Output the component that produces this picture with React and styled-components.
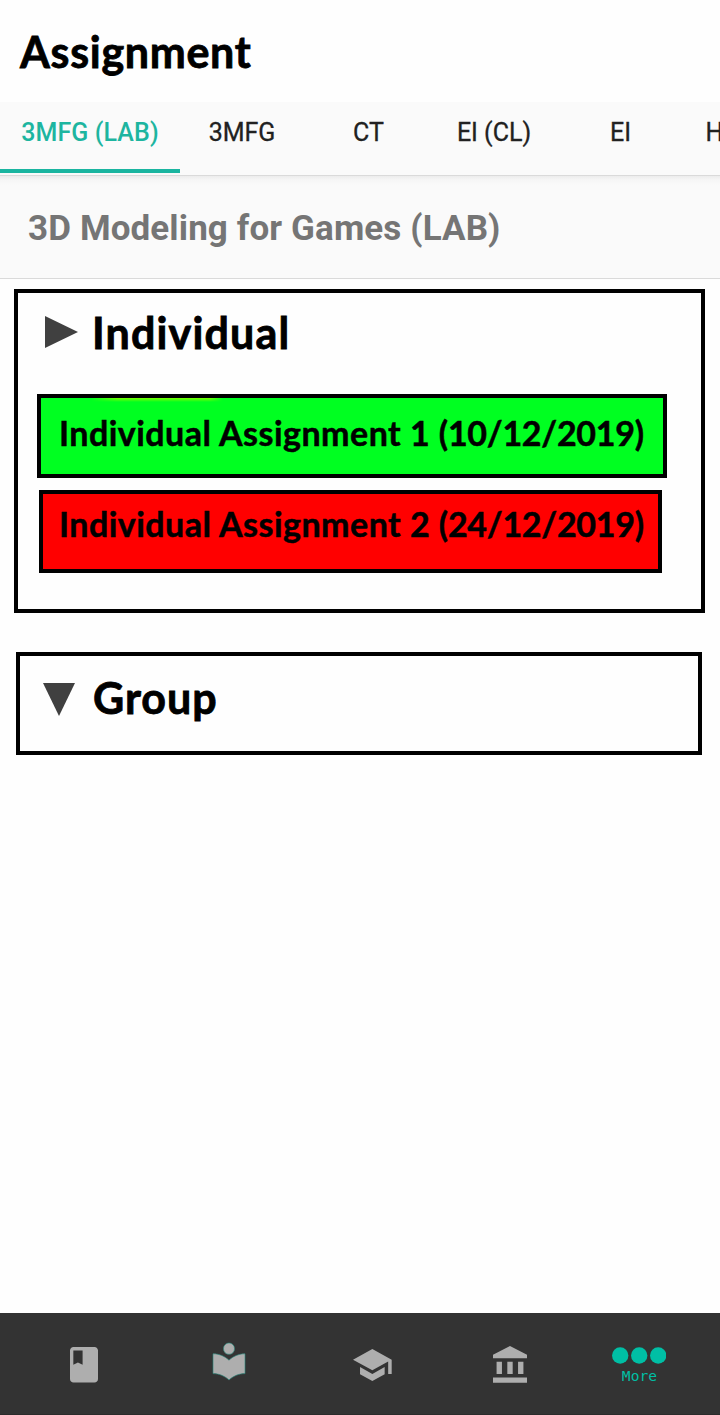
import React from "react";
import styled, { createGlobalStyle } from "styled-components";

const Global = createGlobalStyle`
  * { box-sizing: border-box; }
  body { margin: 0; background: #fefefe; }
`;

const Page = styled.div`
  width: 720px;
  height: 1415px;
  display: flex;
  flex-direction: column;
  overflow: hidden;
  background: #fefefe;
  font-family: Roboto, "Liberation Sans", sans-serif;
`;

const Header = styled.header`
  height: 102px;
  flex: none;
  padding: 26px 0 0 20px;
`;

const Heading = styled.span`
  display: block;
  width: max-content;
  font: 700 ${(p) => p.$size}px/${(p) => p.$line || 52}px Lato, "Liberation Sans", sans-serif;
  letter-spacing: ${(p) => p.$spacing}px;
  color: #000;
  -webkit-text-stroke: ${(p) => p.$weight || 0.8}px #000;
  white-space: nowrap;
`;

const DateText = styled.span`
  letter-spacing: -0.26px;
`;

const Tabs = styled.nav`
  height: 74px;
  flex: none;
  display: flex;
  overflow: hidden;
  background: #fafafa;
  border-bottom: 1px solid #dadada;
`;

const Tab = styled.div`
  flex: none;
  width: ${(p) => p.$width}px;
  height: 71px;
  padding-top: 16px;
  text-align: center;
  font-size: 25px;
  line-height: 30px;
  font-weight: ${(p) => (p.$active ? 500 : 400)};
  -webkit-text-stroke: ${(p) => (p.$active ? 0 : 0.3)}px currentColor;
  letter-spacing: ${(p) => (p.$active ? 0.1 : 0)}px;
  color: ${(p) => (p.$active ? "#1db5a0" : "#212121")};
  border-bottom: 4px solid ${(p) => (p.$active ? "#1ab5a0" : "transparent")};
  white-space: nowrap;
`;

const Course = styled.section`
  height: 103px;
  flex: none;
  padding: 33px 0 0 28px;
  font-size: 35px;
  line-height: 40px;
  font-weight: 700;
  letter-spacing: 0.12px;
  color: #757575;
  background: linear-gradient(#ececec, #f6f6f6 4px, #fafafa 9px);
  border-bottom: 1px solid #dadada;
`;

const Main = styled.main`
  flex: 1;
  display: flex;
  flex-direction: column;
  align-items: flex-start;
  gap: 39px;
  padding: 10px 0 0 14px;
`;

const Panel = styled.section`
  width: ${(p) => p.$width}px;
  height: ${(p) => p.$height}px;
  margin-left: ${(p) => p.$indent || 0}px;
  border: 4px solid #000;
`;

const PanelTitle = styled.div`
  display: flex;
  align-items: flex-start;
  gap: ${(p) => p.$gap}px;
  padding: ${(p) => p.$top}px 0 0 ${(p) => p.$left}px;
  svg { flex: none; margin-top: ${(p) => p.$drop}px; fill: #404040; }
`;

const Assignment = styled.div`
  position: relative;
  width: ${(p) => p.$width}px;
  height: ${(p) => p.$height}px;
  margin: ${(p) => p.$top}px 0 0 ${(p) => p.$left}px;
  padding: ${(p) => p.$padTop}px 0 0 ${(p) => p.$padLeft}px;
  border: 4px solid #000;
  background: ${(p) => p.$color};
`;

const Glow = styled.i`
  position: absolute;
  top: 0;
  left: 50px;
  width: 132px;
  height: 4px;
  background: linear-gradient(90deg, transparent, #7dff00 20%, #7dff00 90%, transparent);
  mask-image: linear-gradient(#000, transparent);
`;

const BottomBar = styled.footer`
  height: 102px;
  flex: none;
  display: flex;
  align-items: flex-start;
  background: #333;
  border-bottom: 1px solid #2b2b2b;
`;

const NavIcon = styled.svg`
  flex: none;
  display: block;
  margin: ${(p) => p.$top}px 0 0 ${(p) => p.$left}px;
  fill: #aeaeae;
  overflow: visible;
`;

const More = styled.div`
  width: 54px;
  margin: 34px 0 0 85.5px;
  color: #00bfa5;
  font: 14.5px/16px "DejaVu Sans Mono", monospace;
  letter-spacing: 0.1px;
  text-align: center;
  svg { display: block; fill: currentColor; margin-bottom: 4px; }
`;

const tabs = [
  ["3MFG (LAB)", 180],
  ["3MFG", 124],
  ["CT", 129],
  ["EI (CL)", 122],
  ["EI", 131],
  ["HCI", 80],
];

export default function App() {
  return (
    <Page>
      <Global />
      <Header>
        <Heading $size={43} $spacing={0.7}>Assignment</Heading>
      </Header>
      <Tabs>
        {tabs.map(([label, width], i) => (
          <Tab key={label} $width={width} $active={i === 0}>{label}</Tab>
        ))}
      </Tabs>
      <Course>3D Modeling for Games (LAB)</Course>
      <Main>
        <Panel $width={691} $height={324}>
          <PanelTitle $top={14} $left={27} $gap={14} $drop={9}>
            <svg width="33" height="32"><path d="M0 0L33 16L0 32Z" /></svg>
            <Heading $size={43} $spacing={1.15}>Individual</Heading>
          </PanelTitle>
          <Assignment $width={630} $height={84} $top={35} $left={19} $padTop={14} $padLeft={18} $color="#00ff21">
            <Glow />
            <Heading $size={34} $line={42} $spacing={0.47} $weight={0.5}>
              Individual Assignment 1 <DateText>(10/12/2019)</DateText>
            </Heading>
          </Assignment>
          <Assignment $width={623} $height={83} $top={12} $left={21} $padTop={9} $padLeft={16} $color="#ff0000">
            <Heading $size={34} $line={42} $spacing={0.47} $weight={0.5}>
              Individual Assignment 2 <DateText>(24/12/2019)</DateText>
            </Heading>
          </Assignment>
        </Panel>
        <Panel $width={686} $height={103} $indent={2}>
          <PanelTitle $top={16} $left={23} $gap={18} $drop={11}>
            <svg width="32" height="33"><path d="M0 0H32L16 33Z" /></svg>
            <Heading $size={43} $spacing={1}>Group</Heading>
          </PanelTitle>
        </Panel>
      </Main>
      <BottomBar>
        <NavIcon $left={70} $top={34} width="28" height="35.5" viewBox="4 2 16 20" preserveAspectRatio="none">
          <path d="M18 2H6c-1.1 0-2 .9-2 2v16c0 1.1.9 2 2 2h12c1.1 0 2-.9 2-2V4c0-1.1-.9-2-2-2zM5.9 4h5.3v8l-2.65-1.3L5.9 12V4z" />
        </NavIcon>
        <NavIcon $left={115} $top={30} width="32" height="37" viewBox="3 2 18 20.55" preserveAspectRatio="none" stroke="#268b7f" strokeWidth=".35">
          <path d="M12 11.55C9.64 9.35 6.48 8 3 8v11c3.48 0 6.64 1.35 9 3.55 2.36-2.19 5.52-3.55 9-3.55V8c-3.48 0-6.64 1.35-9 3.55zM12 8.3c1.8 0 3.1-1.4 3.1-3.15S13.8 2 12 2 8.9 3.4 8.9 5.15 10.2 8.3 12 8.3z" />
        </NavIcon>
        <NavIcon $left={108} $top={36} width="38.7" height="32" viewBox="1 3 22 18" preserveAspectRatio="none">
          <path d="M5 13.18v4L12 21l7-3.82v-4L12 17l-7-3.82zM12 3L1 9l11 6 9-4.91V17h2V9L12 3z" />
        </NavIcon>
        <NavIcon $left={101.3} $top={33} width="34" height="36.7" viewBox="2 1 19 21" preserveAspectRatio="none">
          <path d="M4 10v7h3v-7H4zm6 0v7h3v-7h-3zM2 22h19v-3H2v3zm14-12v7h3v-7h-3zm-4.5-9L2 6v2h19V6l-9.5-5z" />
        </NavIcon>
        <More>
          <svg width="54" height="17"><circle cx="8.2" cy="8.5" r="8.2" /><circle cx="27.2" cy="8.5" r="8.2" /><circle cx="46.2" cy="8.5" r="8.2" /></svg>
          More
        </More>
      </BottomBar>
    </Page>
  );
}
